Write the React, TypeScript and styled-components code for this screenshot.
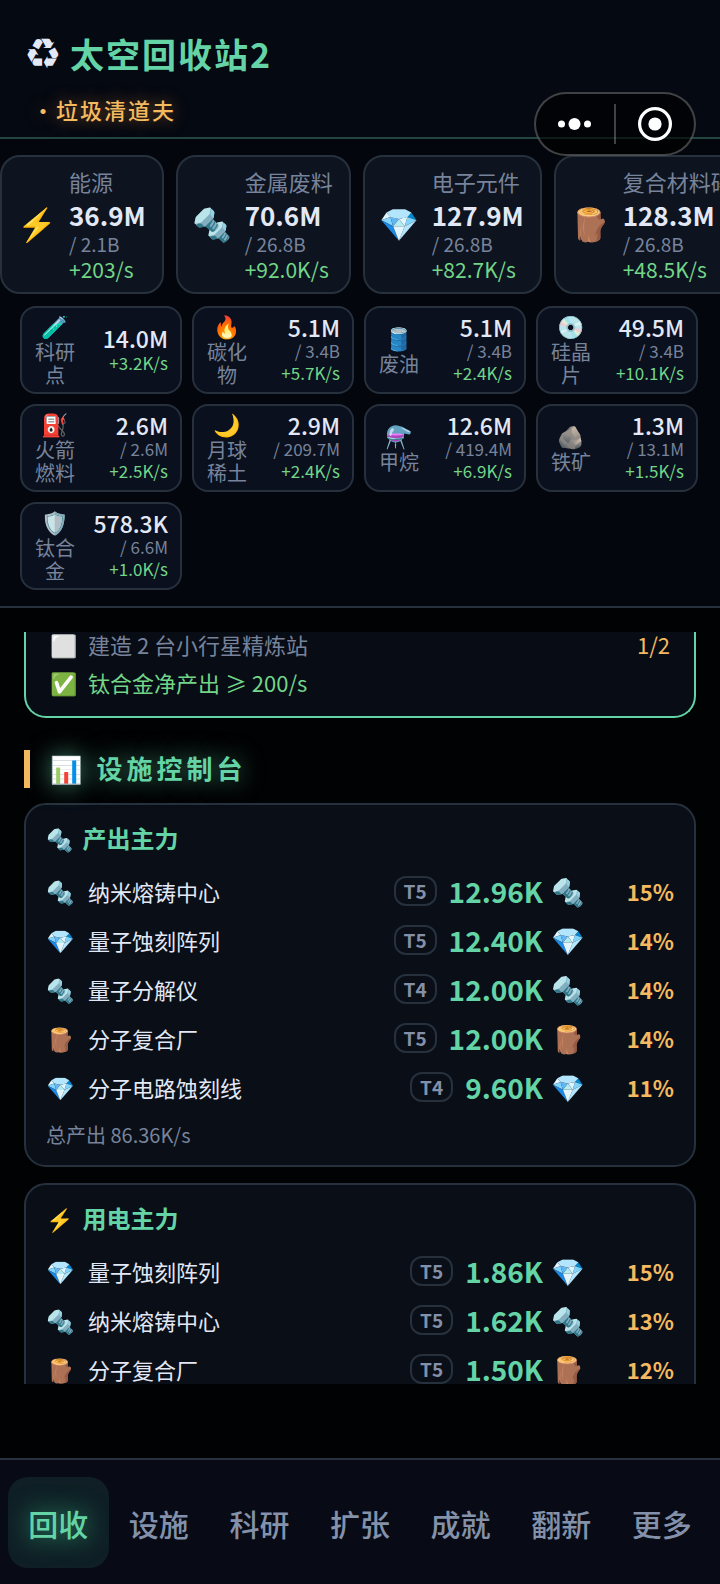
import React from 'react'
import styled, { createGlobalStyle, css } from 'styled-components'

type Resource = {
  icon: string
  name: string
  value: string
  cap?: string
  rate: string
}

type Facility = {
  icon: string
  name: string
  tier: string
  value: string
  percent: string
}

const primaryResources: Resource[] = [
  { icon: '⚡', name: '能源', value: '36.9M', cap: '2.1B', rate: '+203/s' },
  { icon: '🔩', name: '金属废料', value: '70.6M', cap: '26.8B', rate: '+92.0K/s' },
  { icon: '💎', name: '电子元件', value: '127.9M', cap: '26.8B', rate: '+82.7K/s' },
  { icon: '🪵', name: '复合材料碎片', value: '128.3M', cap: '26.8B', rate: '+48.5K/s' },
]

const minorResources: Resource[] = [
  { icon: '🧪', name: '科研点', value: '14.0M', rate: '+3.2K/s' },
  { icon: '🔥', name: '碳化物', value: '5.1M', cap: '3.4B', rate: '+5.7K/s' },
  { icon: '🛢️', name: '废油', value: '5.1M', cap: '3.4B', rate: '+2.4K/s' },
  { icon: '💿', name: '硅晶片', value: '49.5M', cap: '3.4B', rate: '+10.1K/s' },
  { icon: '⛽', name: '火箭燃料', value: '2.6M', cap: '2.6M', rate: '+2.5K/s' },
  { icon: '🌙', name: '月球稀土', value: '2.9M', cap: '209.7M', rate: '+2.4K/s' },
  { icon: '⚗️', name: '甲烷', value: '12.6M', cap: '419.4M', rate: '+6.9K/s' },
  { icon: '🪨', name: '铁矿', value: '1.3M', cap: '13.1M', rate: '+1.5K/s' },
  { icon: '🛡️', name: '钛合金', value: '578.3K', cap: '6.6M', rate: '+1.0K/s' },
]

const producers: Facility[] = [
  { icon: '🔩', name: '纳米熔铸中心', tier: 'T5', value: '12.96K', percent: '15%' },
  { icon: '💎', name: '量子蚀刻阵列', tier: 'T5', value: '12.40K', percent: '14%' },
  { icon: '🔩', name: '量子分解仪', tier: 'T4', value: '12.00K', percent: '14%' },
  { icon: '🪵', name: '分子复合厂', tier: 'T5', value: '12.00K', percent: '14%' },
  { icon: '💎', name: '分子电路蚀刻线', tier: 'T4', value: '9.60K', percent: '11%' },
]

const consumers: Facility[] = [
  { icon: '💎', name: '量子蚀刻阵列', tier: 'T5', value: '1.86K', percent: '15%' },
  { icon: '🔩', name: '纳米熔铸中心', tier: 'T5', value: '1.62K', percent: '13%' },
  { icon: '🪵', name: '分子复合厂', tier: 'T5', value: '1.50K', percent: '12%' },
]

const tabs = ['回收', '设施', '科研', '扩张', '成就', '翻新', '更多']

const GlobalStyle = createGlobalStyle`
  :root {
    --color-main: #64d4a6;
    --color-accent: #f5b95f;
    --color-rate: #72d588;
    --color-text: #e2e8f5;
    --color-sub: #77839b;
    --color-line: #26313d;
  }

  * {
    box-sizing: border-box;
  }

  body {
    margin: 0;
    background: #010203;
    color: var(--color-text);
    font-family: 'Noto Sans CJK SC', 'Noto Color Emoji', sans-serif;
  }

  ul, h1, h2, h3, p {
    margin: 0;
    padding: 0;
    list-style: none;
  }
`

const Shell = styled.div`
  position: relative;
  display: flex;
  flex-direction: column;
  height: 100vh;
  overflow: hidden;
`

const Header = styled.header`
  padding: 29px 24px 11px;
  background: #050912;
  border-bottom: 2px solid #23453f;
`

const Title = styled.h1`
  display: flex;
  align-items: center;
  gap: 8px;
  color: var(--color-main);
  font-size: 34px;
  line-height: 50px;
  letter-spacing: 2px;
`

const RecycleMark = styled.span`
  width: 38px;
  color: var(--color-text);
  font-family: 'DejaVu Sans', sans-serif;
  font-weight: 400;
  font-size: 42px;
  letter-spacing: 0;
`

const Rank = styled.p`
  margin-top: 14px;
  padding-left: 8px;
  color: var(--color-accent);
  font-size: 22px;
  font-weight: 500;
  line-height: 33px;
  letter-spacing: 2px;
  text-shadow: 0 0 16px rgba(245, 150, 60, 0.5);
`

const Capsule = styled.div`
  position: absolute;
  top: 92px;
  right: 24px;
  display: flex;
  align-items: center;
  width: 162px;
  height: 64px;
  border: 2px solid rgba(255, 255, 255, 0.25);
  border-radius: 32px;
  background: rgba(0, 0, 0, 0.6);
`

const CapsuleButton = styled.button`
  display: flex;
  flex: 1;
  align-items: center;
  justify-content: center;
  height: 40px;
  padding: 0;
  border: 0;
  background: none;

  & + & {
    border-left: 2px solid rgba(255, 255, 255, 0.25);
  }
`

const Resources = styled.section`
  background: #03060c;
  border-bottom: 2px solid var(--color-line);
  padding: 16px 0;
`

const PrimaryList = styled.ul`
  display: flex;
  gap: 12px;
  overflow: hidden;
`

const cardFrame = css`
  border: 2px solid var(--color-line);
  background: #0d131f;
`

const PrimaryCard = styled.li`
  ${cardFrame}
  display: flex;
  flex: none;
  align-items: center;
  gap: 12px;
  height: 139px;
  padding: 0 16px 5px 15px;
  border-radius: 20px;
`

const PrimaryIcon = styled.span`
  width: 40px;
  font-size: 32px;
  line-height: 40px;
  text-align: center;
`

const Name = styled.div`
  color: var(--color-sub);
  font-size: 22px;
  line-height: 36px;
  white-space: nowrap;
`

const Value = styled.div<{ $small?: boolean }>`
  font-size: ${({ $small }) => ($small ? 23 : 26)}px;
  font-weight: ${({ $small }) => ($small ? 500 : 700)};
  line-height: ${({ $small }) => ($small ? 26 : 32)}px;
`

const Cap = styled.div<{ $small?: boolean }>`
  color: var(--color-sub);
  font-size: ${({ $small }) => ($small ? 17 : 19)}px;
  line-height: ${({ $small }) => ($small ? 21 : 26)}px;
`

const Rate = styled.div<{ $small?: boolean }>`
  color: var(--color-rate);
  font-size: ${({ $small }) => ($small ? 17 : 21)}px;
  line-height: ${({ $small }) => ($small ? 23 : 24)}px;
`

const MinorGrid = styled.ul`
  display: grid;
  grid-template-columns: repeat(4, 1fr);
  gap: 10px;
  padding: 12px 22px 0 20px;
`

const MinorCard = styled.li`
  ${cardFrame}
  display: flex;
  align-items: center;
  justify-content: space-between;
  height: 88px;
  padding: 0 12px 0 13px;
  border-radius: 16px;
  background: #0a101d;
`

const MinorLabel = styled.div`
  width: 40px;
  color: var(--color-sub);
  font-size: 20px;
  line-height: 23px;
  text-align: center;
`

const MinorIcon = styled.div`
  display: flex;
  justify-content: center;
  margin-bottom: 4px;
  font-size: 22px;
  line-height: 22px;
`

const MinorStats = styled.div`
  padding-bottom: 2px;
  text-align: right;
  white-space: nowrap;
`

const Content = styled.main`
  flex: 1;
  min-height: 0;
  margin: 24px 0 74px;
  padding: 0 24px;
  overflow: hidden;
`

const TaskPanel = styled.ul`
  padding: 0 24px 16px;
  border: 2px solid var(--color-main);
  border-top: 0;
  border-radius: 0 0 22px 22px;
  background: #080c15;
`

const Task = styled.li<{ $done?: boolean }>`
  display: flex;
  align-items: center;
  height: 37px;
  color: ${({ $done }) => ($done ? 'var(--color-rate)' : 'var(--color-sub)')};
  font-size: 22px;

  &:first-child {
    height: 31px;
    padding-bottom: 8px;
  }
`

const TaskIcon = styled.span`
  width: 38px;
  font-size: 22px;
`

const TaskCount = styled.span`
  margin-left: auto;
  color: var(--color-accent);
`

const SectionTitle = styled.h2`
  display: flex;
  align-items: center;
  gap: 10px;
  height: 38px;
  margin: 32px 0 15px;
  padding: 0 0 4px 20px;
  border-left: 6px solid var(--color-accent);
  color: var(--color-main);
  font-size: 26px;
  letter-spacing: 4px;
  text-shadow: 0 0 24px rgba(100, 212, 166, 0.6);
`

const Panel = styled.section`
  ${cardFrame}
  margin-bottom: 16px;
  padding: 15px 20px 14px;
  border-radius: 22px;
  background: #090e17;
`

const PanelTitle = styled.h3`
  display: flex;
  align-items: center;
  gap: 9px;
  margin-bottom: 10px;
  color: var(--color-main);
  font-size: 24px;
  line-height: 36px;
`

const PanelIcon = styled.span`
  font-size: 22px;
`

const FacilityRow = styled.li`
  display: flex;
  align-items: center;
  height: 49px;
  font-size: 22px;
`

const FacilityIcon = styled.span`
  width: 42px;
  font-size: 23px;
`

const Tier = styled.span`
  margin: 0 12px 0 auto;
  padding: 0 8px;
  border: 2px solid var(--color-line);
  border-radius: 12px;
  color: #8490a8;
  font-size: 19px;
  font-weight: 700;
  line-height: 26px;
`

const Output = styled.span`
  display: flex;
  align-items: center;
  gap: 8px;
  color: var(--color-main);
  font-size: 28px;
  font-weight: 700;
`

const OutputIcon = styled.span`
  width: 35px;
  font-size: 27px;
  font-weight: 400;
`

const Percent = styled.span`
  width: 88px;
  color: var(--color-accent);
  font-weight: 700;
  text-align: right;
`

const Total = styled.p`
  margin-top: 8px;
  color: var(--color-sub);
  font-size: 20px;
  line-height: 32px;
`

const TabBar = styled.nav`
  display: flex;
  padding: 17px 8px 16px;
  border-top: 2px solid var(--color-line);
  background: #080b15;
`

const Tab = styled.button<{ $active?: boolean }>`
  flex: 1;
  height: 91px;
  padding: 0;
  border: 0;
  border-radius: 20px;
  background: ${({ $active }) => ($active ? '#0f1f25' : 'none')};
  color: ${({ $active }) => ($active ? 'var(--color-main)' : '#8491aa')};
  font-family: inherit;
  font-size: 30px;
  font-weight: 500;
  text-shadow: ${({ $active }) =>
    $active ? '0 0 24px rgba(70, 230, 160, 0.7)' : 'none'};
`

const FacilityPanel: React.FC<{
  icon: string
  title: string
  items: Facility[]
  total?: string
}> = ({ icon, title, items, total }) => (
  <Panel>
    <PanelTitle>
      <PanelIcon>{icon}</PanelIcon>
      {title}
    </PanelTitle>
    <ul>
      {items.map((item) => (
        <FacilityRow key={item.name}>
          <FacilityIcon>{item.icon}</FacilityIcon>
          {item.name}
          <Tier>{item.tier}</Tier>
          <Output>
            {item.value}
            <OutputIcon>{item.icon}</OutputIcon>
          </Output>
          <Percent>{item.percent}</Percent>
        </FacilityRow>
      ))}
    </ul>
    {total && <Total>{total}</Total>}
  </Panel>
)

const App: React.FC = () => (
  <>
    <GlobalStyle />
    <Shell>
      <Header>
        <Title>
          <RecycleMark>♻</RecycleMark>
          太空回收站2
        </Title>
        <Rank>・垃圾清道夫</Rank>
      </Header>

      <Resources>
        <PrimaryList>
          {primaryResources.map((item) => (
            <PrimaryCard key={item.name}>
              <PrimaryIcon>{item.icon}</PrimaryIcon>
              <div>
                <Name>{item.name}</Name>
                <Value>{item.value}</Value>
                <Cap>/ {item.cap}</Cap>
                <Rate>{item.rate}</Rate>
              </div>
            </PrimaryCard>
          ))}
        </PrimaryList>
        <MinorGrid>
          {minorResources.map((item) => (
            <MinorCard key={item.name}>
              <MinorLabel>
                <MinorIcon>{item.icon}</MinorIcon>
                {item.name}
              </MinorLabel>
              <MinorStats>
                <Value $small>{item.value}</Value>
                {item.cap && <Cap $small>/ {item.cap}</Cap>}
                <Rate $small>{item.rate}</Rate>
              </MinorStats>
            </MinorCard>
          ))}
        </MinorGrid>
      </Resources>

      <Content>
        <TaskPanel>
          <Task>
            <TaskIcon>⬜</TaskIcon>
            建造 2 台小行星精炼站
            <TaskCount>1/2</TaskCount>
          </Task>
          <Task $done>
            <TaskIcon>✅</TaskIcon>
            钛合金净产出 ≥ 200/s
          </Task>
        </TaskPanel>
        <SectionTitle>
          <span>📊</span>
          设施控制台
        </SectionTitle>
        <FacilityPanel
          icon="🔩"
          title="产出主力"
          items={producers}
          total="总产出 86.36K/s"
        />
        <FacilityPanel icon="⚡" title="用电主力" items={consumers} />
      </Content>

      <TabBar>
        {tabs.map((tab, i) => (
          <Tab key={tab} $active={i === 0}>
            {tab}
          </Tab>
        ))}
      </TabBar>

      <Capsule>
        <CapsuleButton aria-label="更多操作">
          <svg width="34" height="14" fill="#fff">
            <circle cx="3.5" cy="7" r="3.5" />
            <circle cx="16.5" cy="7" r="6" />
            <circle cx="29.5" cy="7" r="3.5" />
          </svg>
        </CapsuleButton>
        <CapsuleButton aria-label="关闭">
          <svg width="36" height="36">
            <circle cx="18" cy="18" r="15.4" fill="none" stroke="#fff" strokeWidth="3.2" />
            <circle cx="18" cy="18" r="6.6" fill="#fff" />
          </svg>
        </CapsuleButton>
      </Capsule>
    </Shell>
  </>
)

export default App
